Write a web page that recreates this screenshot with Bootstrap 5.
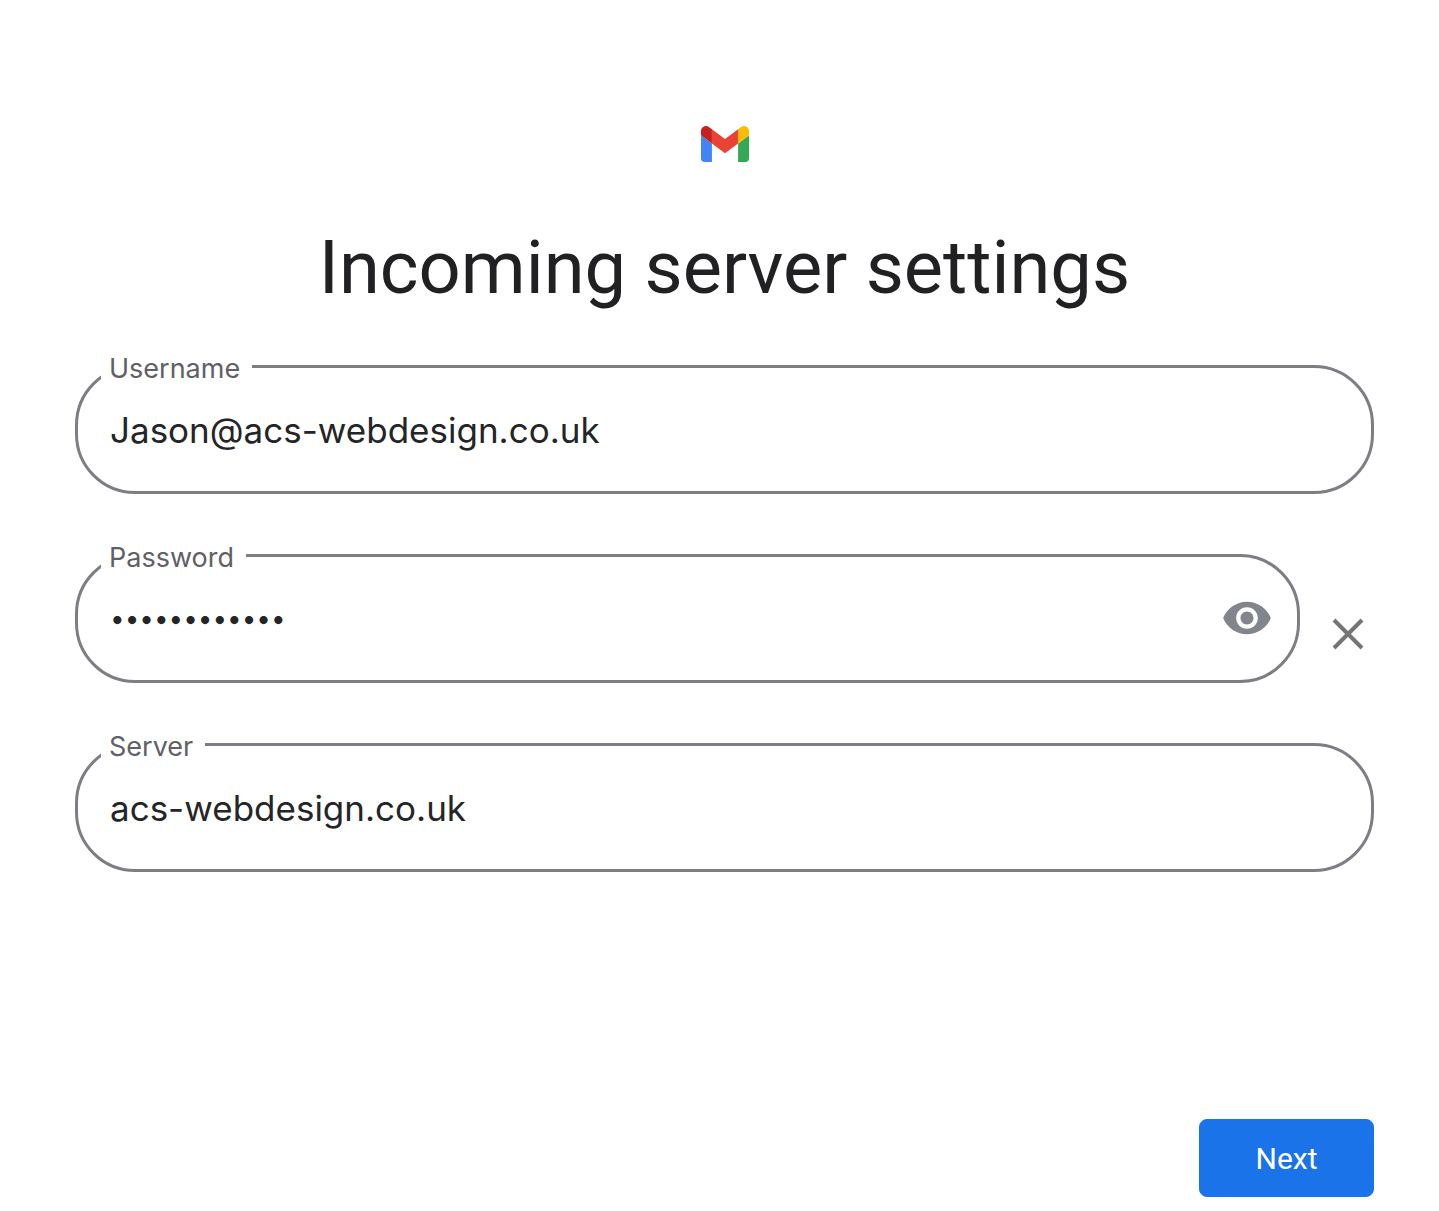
<!DOCTYPE html>
<html lang="en">
<head>
<meta charset="utf-8">
<meta name="viewport" content="width=device-width, initial-scale=1">
<title>Incoming server settings</title>
<link href="https://cdn.jsdelivr.net/npm/bootstrap@5.3.0/dist/css/bootstrap.min.css" rel="stylesheet">
<style>
body { font-family: Roboto, "Liberation Sans", sans-serif; color: #212124; }
.setup-page { padding: 126px 65px 14px 75px; }
.setup-title { font-size: 74px; line-height: 84px; margin: 64px 0 55px; }
.setup-fields { gap: 60px; }
.field-input.form-control {
  height: 129px; padding: 0 32px; border: 3px solid #7f7c83; border-radius: 60px;
  font-family: Inter, "Liberation Sans", sans-serif; font-size: 35px; color: #242527;
}
.field-input.has-toggle { padding-right: 96px; }
.field-input.has-toggle[type="password"] { font-size: 26px; }
.field-input.form-control:focus { border-color: #1a73e8; box-shadow: none; }
.field-label {
  top: -12px; left: 26px; padding: 0 12px 0 8px; background: #fff;
  font-family: Inter, "Liberation Sans", sans-serif; font-size: 27px; line-height: 32px; color: #5f6066;
}
.icon-button { width: 52px; height: 52px; }
.toggle-button { top: 38px; right: 27px; color: #80868b; }
.clear-button { margin: 0 0 22px 22px; color: #757575; }
.next-button.btn {
  width: 175px; height: 78px; border-radius: 8px; font-size: 30px;
  --bs-btn-bg: #1a73e8; --bs-btn-border-color: #1a73e8;
}
</style>
</head>
<body>
<main class="setup-page container-fluid min-vh-100 d-flex flex-column">
  <svg class="d-block mx-auto" width="48" height="36" viewBox="52 42 88 66" role="img" aria-label="Gmail">
    <path fill="#4285f4" d="M58 108h14V74L52 59v43c0 3.320 2.690 6 6 6"/>
    <path fill="#34a853" d="M120 108h14c3.320 0 6-2.690 6-6V59l-20 15"/>
    <path fill="#fbbc04" d="M120 48v26l20-15v-8c0-7.420-8.470-11.650-14.400-7.200"/>
    <path fill="#ea4335" d="M72 74V48l24 18 24-18v26L96 92"/>
    <path fill="#c5221f" d="M52 51v8l20 15V48l-5.600-4.200c-5.940-4.450-14.400-.22-14.400 7.200"/>
  </svg>
  <h1 class="setup-title fw-normal text-center">Incoming server settings</h1>
  <form class="d-flex flex-column flex-grow-1">
    <div class="setup-fields d-flex flex-column mb-5">
      <div class="position-relative">
        <input class="field-input form-control" id="username" type="text" value="Jason@acs-webdesign.co.uk">
        <label class="field-label position-absolute" for="username">Username</label>
      </div>
      <div class="d-flex align-items-end">
        <div class="position-relative flex-grow-1">
          <input class="field-input has-toggle form-control" id="password" type="password" value="123456789012">
          <label class="field-label position-absolute" for="password">Password</label>
          <button class="icon-button toggle-button btn p-0 border-0 position-absolute d-flex" type="button" aria-label="Show password">
            <svg width="52" height="52" viewBox="0 0 24 24" fill="currentColor"><path d="M12 4.500C7 4.500 2.730 7.610 1 12c1.730 4.390 6 7.500 11 7.500s9.270-3.110 11-7.500c-1.730-4.390-6-7.500-11-7.500zM12 17c-2.760 0-5-2.240-5-5s2.240-5 5-5 5 2.240 5 5-2.240 5-5 5zm0-8c-1.660 0-3 1.340-3 3s1.340 3 3 3 3-1.340 3-3-1.340-3-3-3z"/></svg>
          </button>
        </div>
        <button class="icon-button clear-button btn p-0 border-0 d-flex" type="button" aria-label="Clear password">
          <svg width="52" height="52" viewBox="0 0 52 52" fill="none" stroke="currentColor" stroke-width="4"><path d="M12 11 40 39M40 11 12 39"/></svg>
        </button>
      </div>
      <div class="position-relative">
        <input class="field-input form-control" id="server" type="text" value="acs-webdesign.co.uk">
        <label class="field-label position-absolute" for="server">Server</label>
      </div>
    </div>
    <button class="next-button btn btn-primary align-self-end mt-auto" type="submit">Next</button>
  </form>
</main>
<script src="https://cdn.jsdelivr.net/npm/bootstrap@5.3.0/dist/js/bootstrap.bundle.min.js"></script>
</body>
</html>
